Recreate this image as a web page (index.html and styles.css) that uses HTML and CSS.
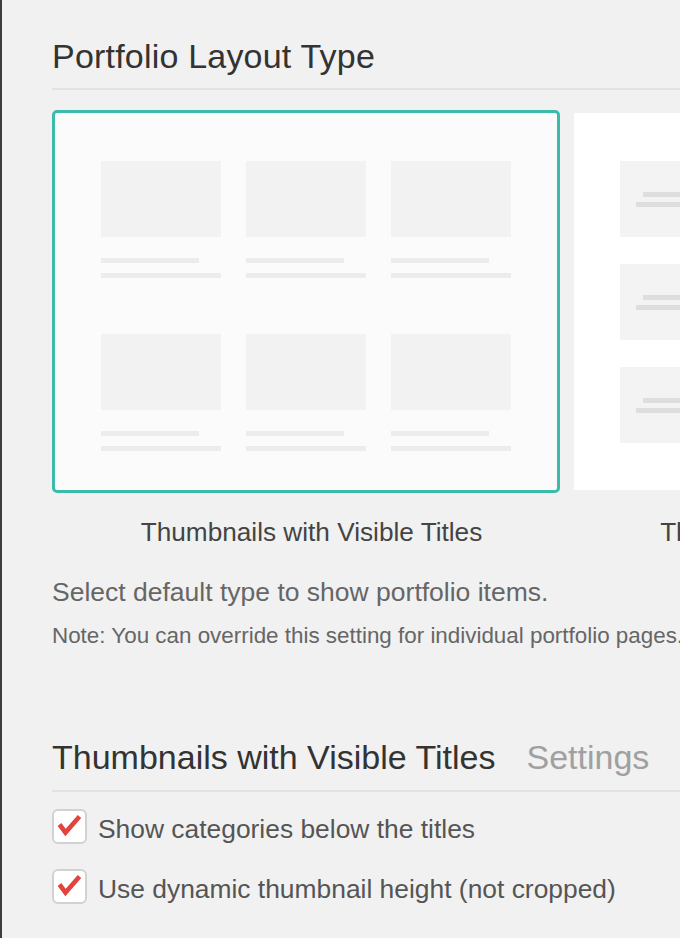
FILE: index.html
```html
<!DOCTYPE html>
<html lang="en">
<head>
<meta charset="utf-8">
<title>Portfolio Layout Type</title>
<link rel="stylesheet" href="styles.css">
</head>
<body>
<div class="page">
  <section class="section">
    <h2 class="section-title first-title">Portfolio Layout Type</h2>
    <div class="layouts">
      <div class="layout-option">
        <div class="layout-card selected">
          <div class="grid-preview">
            <div class="thumb"><div class="thumb-img"></div><div class="thumb-line short"></div><div class="thumb-line"></div></div>
            <div class="thumb"><div class="thumb-img"></div><div class="thumb-line short"></div><div class="thumb-line"></div></div>
            <div class="thumb"><div class="thumb-img"></div><div class="thumb-line short"></div><div class="thumb-line"></div></div>
            <div class="thumb"><div class="thumb-img"></div><div class="thumb-line short"></div><div class="thumb-line"></div></div>
            <div class="thumb"><div class="thumb-img"></div><div class="thumb-line short"></div><div class="thumb-line"></div></div>
            <div class="thumb"><div class="thumb-img"></div><div class="thumb-line short"></div><div class="thumb-line"></div></div>
          </div>
        </div>
        <div class="layout-label">Thumbnails with Visible Titles</div>
      </div>
      <div class="layout-option">
        <div class="layout-card plain">
          <div class="list-preview">
            <div class="list-item"><div class="list-line short"></div><div class="list-line"></div></div>
            <div class="list-item"><div class="list-line short"></div><div class="list-line"></div></div>
            <div class="list-item"><div class="list-line short"></div><div class="list-line"></div></div>
          </div>
        </div>
        <div class="layout-label second-label">Thumbnails with Hover Titles</div>
      </div>
    </div>
    <p class="desc">Select default type to show portfolio items.</p>
    <p class="note">Note: You can override this setting for individual portfolio pages.</p>
  </section>

  <section class="section settings">
    <h2 class="section-title">Thumbnails with Visible Titles<span class="muted">Settings</span></h2>
    <label class="check-row first">
      <svg class="checkbox" width="35" height="35" viewBox="0 0 35 35"><rect x="1" y="1" width="33" height="33" rx="5" fill="#fff" stroke="#d2d2d2" stroke-width="2"/><path d="M7.5 15.5 L13.5 23.5 L27.5 7.5" fill="none" stroke="#e2433d" stroke-width="4.6" stroke-linejoin="miter"/></svg>
      <span class="check-text">Show categories below the titles</span>
    </label>
    <label class="check-row">
      <svg class="checkbox" width="35" height="35" viewBox="0 0 35 35"><rect x="1" y="1" width="33" height="33" rx="5" fill="#fff" stroke="#d2d2d2" stroke-width="2"/><path d="M7.5 15.5 L13.5 23.5 L27.5 7.5" fill="none" stroke="#e2433d" stroke-width="4.6" stroke-linejoin="miter"/></svg>
      <span class="check-text">Use dynamic thumbnail height (not cropped)</span>
    </label>
  </section>
</div>
</body>
</html>
```

FILE: styles.css
```css
html, body {
  margin: 0;
  padding: 0;
  background: #f1f1f1;
  overflow: hidden;
}

body {
  width: 680px;
  height: 938px;
  font-family: "Liberation Sans", Arial, sans-serif;
}

.page {
  border-left: 2px solid #3c3d3f;
  min-height: 938px;
  padding: 36px 0 0 50px;
  box-sizing: border-box;
}

.section-title {
  margin: 0;
  font-size: 34px;
  font-weight: normal;
  line-height: 40px;
  color: #333;
  padding-bottom: 12px;
  border-bottom: 2px solid #e2e2e2;
  white-space: nowrap;
}

.section-title.first-title {
  letter-spacing: 0.2px;
}

.layouts {
  display: flex;
  margin-top: 20px;
  width: 2000px;
}

.layout-option {
  flex: 0 0 519px;
  width: 519px;
}

.layout-card {
  width: 508px;
  height: 383px;
  box-sizing: border-box;
  border: 3px solid transparent;
  border-radius: 5px;
}

.layout-card.selected {
  border-color: #3bbbaa;
  background: #fbfbfb;
}

.layout-card.plain {
  border-radius: 0;
  background-clip: padding-box;
  background-color: #fff;
}

.grid-preview {
  display: grid;
  grid-template-columns: 120px 120px 120px;
  justify-content: space-between;
  row-gap: 56px;
  padding: 48px 46px 0 46px;
}

.thumb-img {
  height: 76px;
  background: #f2f2f2;
}

.thumb-line {
  height: 5px;
  background: #ececec;
  margin-top: 10px;
}

.thumb-line.short {
  width: 98px;
  margin-top: 21px;
}

.list-preview {
  display: flex;
  flex-direction: column;
  gap: 27px;
  padding: 48px 0 0 46px;
}

.list-item {
  width: 410px;
  height: 76px;
  background: #f3f3f3;
  padding: 31px 0 0 16px;
  box-sizing: border-box;
}

.list-line {
  height: 5px;
  background: #dedede;
  margin-top: 5px;
}

.list-line.short {
  margin: 0 0 0 7px;
}

.layout-label {
  margin-top: 24px;
  text-align: center;
  font-size: 26.2px;
  line-height: 30px;
  color: #444;
  white-space: nowrap;
}

.layout-label.second-label {
  padding-right: 6px;
}

.desc {
  margin: 30px 0 0;
  font-size: 26.5px;
  line-height: 30px;
  color: #666;
  white-space: nowrap;
}

.note {
  margin: 16px 0 0;
  font-size: 22.4px;
  line-height: 26px;
  color: #666;
  white-space: nowrap;
}

.settings {
  margin-top: 88px;
}

.settings .section-title {
  padding-bottom: 13px;
}

.muted {
  color: #a0a0a0;
  margin-left: 31px;
}

.check-row {
  display: flex;
  align-items: flex-start;
  margin-top: 25px;
}

.check-row.first {
  margin-top: 17px;
}

.checkbox {
  flex: 0 0 35px;
  display: block;
}

.check-text {
  margin: 5px 0 0 11px;
  font-size: 26.4px;
  line-height: 30px;
  color: #555;
  white-space: nowrap;
}
```
